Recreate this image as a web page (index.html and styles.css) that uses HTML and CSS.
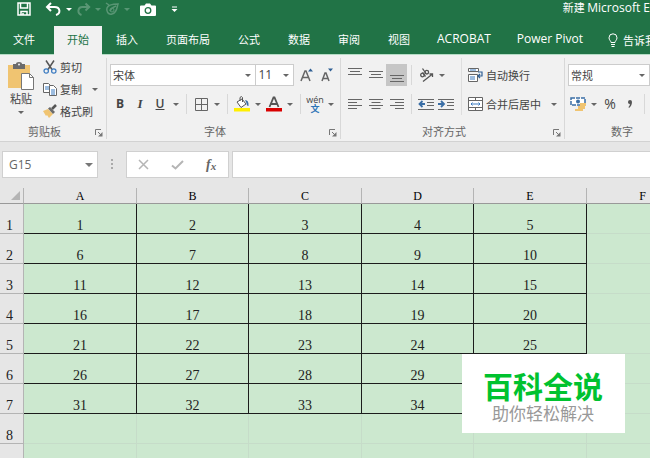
FILE: index.html
```html
<!DOCTYPE html>
<html lang="zh-CN">
<head>
  <meta charset="utf-8">
  <meta name="viewport" content="width=device-width, initial-scale=1.0">
  <title>新建 Microsoft Excel</title>
  <link rel="stylesheet" href="styles.css">
</head>

<body>

  <header class="titlebar">
    <div class="quick">
      <button class="qbtn" aria-label="保存"><svg width="14" height="14" viewBox="0 0 14 14"><path d="M1 1h12v12H1z M3.500 1v5h7V1 M4 13V9.500h6V13 M6 11v2" fill="none" stroke="#fff" stroke-width="1.500"/></svg></button>
      <button class="qbtn undo" aria-label="撤消"><svg width="17" height="14" viewBox="0 0 17 14"><path d="M6 1L2 5l4 4 M2 5h7.500c6 0 6.500 6.500 1.500 8" fill="none" stroke="#fff" stroke-width="2"/></svg></button>
      <button class="qcaret" aria-label="撤消列表"></button>
      <button class="qbtn dim" aria-label="恢复"><svg width="15" height="14" viewBox="0 0 15 14"><path d="M9.500 1.500L13.200 5 9.500 8.500 M13 5H6.500c-5 0-5.500 6.500-1 8" fill="none" stroke="#fff" stroke-width="2"/></svg></button>
      <button class="qcaret dim" aria-label="恢复列表"></button>
      <button class="qbtn dim" aria-label="触摸模式"><svg width="15" height="14" viewBox="0 0 15 14"><path d="M1 1l3 2 M2 6c1-3 5-4 11-4-1 3-1 9-6 10-4 1-6-3-5-6z M5 9c1-3 4-4 6-5" fill="none" stroke="#fff" stroke-width="1.500"/><circle cx="7" cy="8" r="2" fill="none" stroke="#fff"/></svg></button>
      <button class="qcaret dim" aria-label="触摸模式列表"></button>
      <button class="qbtn camera" aria-label="照相机"><svg width="16" height="13" viewBox="0 0 16 13"><path d="M1 2.500h3.500L6 .5h4l1.500 2H15q1 0 1 1V12q0 1-1 1H1q-1 0-1-1V3.500q0-1 1-1z" fill="#fff"/><circle cx="8" cy="7.500" r="2.800" fill="none" stroke="#217346" stroke-width="1.300"/></svg></button>
      <button class="qbtn more" aria-label="自定义快速访问工具栏"><svg width="7" height="7" viewBox="0 0 7 7"><path d="M1 1h5" stroke="#fff"/><path d="M.5 3h6l-3 3z" fill="#fff"/></svg></button>
    </div>
    <div class="doc-title">新建 <span class="latin">Microsoft E</span></div>
  </header>

  <nav class="tabs">
    <a href="#" class="tab file">文件</a>
    <a href="#" class="tab active">开始</a>
    <a href="#" class="tab">插入</a>
    <a href="#" class="tab">页面布局</a>
    <a href="#" class="tab">公式</a>
    <a href="#" class="tab">数据</a>
    <a href="#" class="tab">审阅</a>
    <a href="#" class="tab">视图</a>
    <a href="#" class="tab latin">ACROBAT</a>
    <a href="#" class="tab latin">Power Pivot</a>
    <a href="#" class="tab tell"><svg width="10" height="14" viewBox="0 0 10 14"><path d="M3 9.500C3 8 1 7 1 4.800a4 4 0 0 1 8 0C9 7 7 8 7 9.500z M3 11.500h4 M3.500 13.500h3" fill="none" stroke="#fff"/></svg>告诉我</a>
  </nav>

  <div class="ribbon">
    <section class="group clipboard">
      <div class="tools">
        <button class="paste">
          <svg width="28" height="28" viewBox="0 0 28 28"><path d="M1 3h22v23H1z" fill="#f0c471"/><path d="M6 2h3q0-2 3-2t3 2h3v5H6z" fill="#6b6b6b"/><circle cx="12" cy="2.500" r="1" fill="#f1f1f1"/><path d="M14.500 11.500h8l4 4v12h-12z" fill="#fff" stroke="#777"/><path d="M22.500 11.500v4h4" fill="none" stroke="#777"/></svg>
          <span>粘贴</span>
          <i class="caret"></i>
        </button>
        <div class="stack">
          <button class="text-btn"><svg width="14" height="14" viewBox="0 0 14 14"><path d="M3 .5l6 9 M11 .5l-6 9" stroke="#555" stroke-width="1.500"/><circle cx="3.200" cy="11" r="2.200" fill="none" stroke="#3a7ac0" stroke-width="1.200"/><circle cx="10.800" cy="11" r="2.200" fill="none" stroke="#3a7ac0" stroke-width="1.200"/></svg>剪切</button>
          <button class="text-btn"><svg width="14" height="14" viewBox="0 0 14 14"><path d="M.5 1.500h5l2 2v7h-7z" fill="#fff" stroke="#666"/><path d="M2 5h4M2 7h4" stroke="#3a7ac0"/><path d="M6.500 3.500h4l3 3v7h-7z" fill="#fff" stroke="#666"/><path d="M8 8h4M8 10h4M8 12h4" stroke="#3a7ac0"/></svg>复制<i class="caret"></i></button>
          <button class="text-btn"><svg width="14" height="14" viewBox="0 0 14 14"><path d="M0 7l5-2 5 5-4 4-2-3-1 1z" fill="#f0c471"/><path d="M5 4.500l2-1.500 5 5-2 2z" fill="#6b6b6b"/><path d="M9 5l4-4" stroke="#555" stroke-width="2.500"/></svg>格式刷</button>
        </div>
      </div>
      <div class="caption">剪贴板<button class="launcher" aria-label="剪贴板设置"><svg width="8" height="8" viewBox="0 0 8 8"><path d="M.5 6V.5H6 M3 3l3 3" fill="none" stroke="#777"/><path d="M7.500 3v4.500H3z" fill="#777"/></svg></button></div>
    </section>

    <section class="group font">
      <div class="tools rows">
        <div class="row">
          <select class="combo name" aria-label="字体"><option>宋体</option></select>
          <select class="combo size" aria-label="字号"><option>11</option></select>
          <button class="icon grow" aria-label="增大字号"><svg width="14" height="14" viewBox="0 0 14 14"><path d="M1 13L5 3h1l4 10 M2.500 9.500h6" fill="none" stroke="#666" stroke-width="1.500"/><path d="M8 3.500l2.500-3 2.500 3z" fill="#2f5f94"/></svg></button>
          <button class="icon" aria-label="减小字号"><svg width="14" height="14" viewBox="0 0 14 14"><path d="M2 13L5 5h1l3 8 M3 10.500h5" fill="none" stroke="#666" stroke-width="1.500"/><path d="M8 .5l2.500 3 2.500-3z" fill="#2f5f94"/></svg></button>
        </div>
        <div class="row">
          <button class="icon letter bold">B</button>
          <button class="icon letter italic">I</button>
          <button class="icon letter underline">U</button>
          <button class="drop" aria-label="下划线类型"></button>
          <span class="sep"></span>
          <button class="icon" aria-label="边框"><svg width="13" height="13" viewBox="0 0 13 13"><path d="M.5.500h12v12H.5z M6.500.500v12 M.5 6.500h12" fill="none" stroke="#666"/></svg></button>
          <button class="drop" aria-label="边框类型"></button>
          <span class="sep"></span>
          <button class="icon" aria-label="填充颜色"><svg width="16" height="16" viewBox="0 0 16 16"><path d="M3 6l5-3 4 5-5 3.500z" fill="#fff" stroke="#555"/><path d="M6 5V1.500q1.500-2 2.500 0V6" fill="none" stroke="#555"/><path d="M11 4q4 0 3.500 6-2 0-2-3z" fill="#3a6ea5"/><path d="M0 12h16v3.500H0z" fill="#ffef00"/></svg></button>
          <button class="drop" aria-label="填充颜色列表"></button>
          <button class="icon" aria-label="字体颜色"><svg width="16" height="16" viewBox="0 0 16 16"><path d="M3.500 11L7.500 1.500h1L12.500 11 M5 8h6" fill="none" stroke="#555" stroke-width="1.800"/><path d="M0 12h16v3.500H0z" fill="#d90000"/></svg></button>
          <button class="drop" aria-label="字体颜色列表"></button>
          <span class="sep"></span>
          <button class="icon wen"><span>wén</span><b>文</b></button>
          <button class="drop" aria-label="拼音"></button>
        </div>
      </div>
      <div class="caption">字体<button class="launcher" aria-label="字体设置"><svg width="8" height="8" viewBox="0 0 8 8"><path d="M.5 6V.5H6 M3 3l3 3" fill="none" stroke="#777"/><path d="M7.500 3v4.500H3z" fill="#777"/></svg></button></div>
    </section>

    <section class="group align">
      <div class="tools">
        <div class="rows">
          <div class="row">
            <button class="icon wide" aria-label="顶端对齐"><svg width="14" height="16" viewBox="0 0 14 16"><path d="M0 1.500h14M2 4.500h10M0 7.500h14" stroke="#666"/></svg></button>
            <button class="icon wide" aria-label="垂直居中"><svg width="14" height="16" viewBox="0 0 14 16"><path d="M0 4.500h14M2 7.500h10M0 10.500h14" stroke="#666"/></svg></button>
            <button class="icon wide on" aria-label="底端对齐"><svg width="14" height="16" viewBox="0 0 14 16"><path d="M0 8.500h14M2 11.500h10M0 14.500h14" stroke="#666"/></svg></button>
          </div>
          <div class="row">
            <button class="icon wide" aria-label="左对齐"><svg width="14" height="12" viewBox="0 0 14 12"><path d="M0 1.500h14M0 4.500h9M0 7.500h14M0 10.500h9" stroke="#666"/></svg></button>
            <button class="icon wide" aria-label="居中"><svg width="14" height="12" viewBox="0 0 14 12"><path d="M0 1.500h14M2.500 4.500h9M0 7.500h14M2.500 10.500h9" stroke="#666"/></svg></button>
            <button class="icon wide" aria-label="右对齐"><svg width="14" height="12" viewBox="0 0 14 12"><path d="M0 1.500h14M5 4.500h9M0 7.500h14M5 10.500h9" stroke="#666"/></svg></button>
          </div>
        </div>
        <div class="rows">
          <div class="row">
            <span class="sep"></span>
            <button class="icon" aria-label="方向"><svg width="15" height="15" viewBox="0 0 15 15"><g fill="none" stroke="#555" stroke-width="1.300"><circle cx="3.500" cy="7" r="1.800"/><path d="M3.500 4.500l3 4"/><circle cx="7.800" cy="4.200" r="1.800"/><path d="M3.500.500l3.500 5"/><path d="M4 13.500l9.500-7.500 M10.500 6h3v3"/></g></svg></button>
            <button class="drop" aria-label="方向列表"></button>
          </div>
          <div class="row">
            <span class="sep"></span>
            <button class="icon" aria-label="减少缩进量"><svg width="16" height="13" viewBox="0 0 16 13"><path d="M0 1.500h16M9 4.500h7M9 7.500h7M0 11.500h16" stroke="#666"/><path d="M7 6H2M4.500 3L1.500 6l3 3" fill="none" stroke="#3a6ea5" stroke-width="1.800"/></svg></button>
            <button class="icon" aria-label="增加缩进量"><svg width="16" height="13" viewBox="0 0 16 13"><path d="M0 1.500h16M9 4.500h7M9 7.500h7M0 11.500h16" stroke="#666"/><path d="M0 6h5M3 3l3 3-3 3" fill="none" stroke="#3a6ea5" stroke-width="1.800"/></svg></button>
          </div>
        </div>
        <div class="rows merge">
          <div class="row">
            <button class="text-btn"><svg width="15" height="14" viewBox="0 0 15 14"><path d="M.5.500h10v3H.5z M.5 6.500h9v7H.5z" fill="#fff" stroke="#666"/><path d="M2 2h6M2 9h5M2 11h5" stroke="#3a7ac0"/><path d="M10 4h4v4h-3.500 M12 6l-2 2 2 2" fill="none" stroke="#2f5f94" stroke-width="1.200"/></svg>自动换行</button>
          </div>
          <div class="row">
            <button class="text-btn"><svg width="15" height="14" viewBox="0 0 15 14"><path d="M.5.500h14v13H.5z M.5 3.500h14 M.5 10.500h14 M7.500.500v3 M7.500 10.500v3" fill="#fff" stroke="#666"/><path d="M3 7h9M4.500 5.500L3 7l1.500 1.500M10.500 5.500L12 7l-1.500 1.500" fill="none" stroke="#3a7ac0"/></svg>合并后居中<i class="caret"></i></button>
          </div>
        </div>
      </div>
      <div class="caption">对齐方式<button class="launcher" aria-label="对齐设置"><svg width="8" height="8" viewBox="0 0 8 8"><path d="M.5 6V.5H6 M3 3l3 3" fill="none" stroke="#777"/><path d="M7.500 3v4.500H3z" fill="#777"/></svg></button></div>
    </section>

    <section class="group number">
      <div class="tools rows">
        <div class="row">
          <select class="combo format" aria-label="数字格式"><option>常规</option></select>
        </div>
        <div class="row">
          <button class="icon" aria-label="会计数字格式"><svg width="17" height="15" viewBox="0 0 17 15"><path d="M1 1h14v7H1z" fill="#fff" stroke="#3a6ea5" stroke-width="1.500" stroke-dasharray="4 1"/><circle cx="8" cy="4.500" r="2" fill="#3a6ea5"/><path d="M10 6h6v3h-6z M8 9h7v3H8z M5 12h8v2H5z" fill="#f0c471"/></svg></button>
          <button class="drop" aria-label="会计数字格式列表"></button>
          <button class="icon letter percent">%</button>
          <button class="icon letter comma" aria-label="千位分隔样式"><svg width="6" height="9" viewBox="0 0 6 9"><path d="M1 2a2 2 0 0 1 4 0c0 3-1.500 5-3 6l-.5-1c1-1 1.500-2 1.300-3C1.500 4 1 3 1 2z" fill="#555"/></svg></button>
          <span class="sep"></span>
        </div>
      </div>
      <div class="caption">数字</div>
    </section>
  </div>

  <div class="formula-bar">
    <div class="name-box">
      <input type="text" value="G15" aria-label="名称框">
      <i class="caret big"></i>
    </div>
    <span class="dots"></span>
    <div class="fx-box">
      <button aria-label="取消"><svg width="11" height="11" viewBox="0 0 11 11"><path d="M1 1l9 9M10 1l-9 9" stroke="#b5b5b5" stroke-width="1.500"/></svg></button>
      <button aria-label="输入"><svg width="13" height="10" viewBox="0 0 13 10"><path d="M1 5.500l3.500 3L12 1" fill="none" stroke="#b5b5b5" stroke-width="2"/></svg></button>
      <button class="fx" aria-label="插入函数">f<small>x</small></button>
    </div>
    <input type="text" class="formula" aria-label="编辑栏">
  </div>

  <main class="sheet">
    <table>
      <colgroup>
        <col class="c-head"><col class="c-even"><col class="c-odd"><col class="c-even"><col class="c-odd"><col class="c-even"><col class="c-odd">
      </colgroup>
      <thead>
        <tr><th class="corner"><svg width="9" height="9" viewBox="0 0 9 9"><path d="M9 0v9H0z" fill="#b4b4b4"/></svg></th><th>A</th><th>B</th><th>C</th><th>D</th><th>E</th><th>F</th></tr>
      </thead>
      <tbody>
        <tr class="data"><th>1</th><td>1</td><td>2</td><td>3</td><td>4</td><td>5</td><td></td></tr>
        <tr class="data"><th>2</th><td>6</td><td>7</td><td>8</td><td>9</td><td>10</td><td></td></tr>
        <tr class="data"><th>3</th><td>11</td><td>12</td><td>13</td><td>14</td><td>15</td><td></td></tr>
        <tr class="data"><th>4</th><td>16</td><td>17</td><td>18</td><td>19</td><td>20</td><td></td></tr>
        <tr class="data"><th>5</th><td>21</td><td>22</td><td>23</td><td>24</td><td>25</td><td></td></tr>
        <tr class="data"><th>6</th><td>26</td><td>27</td><td>28</td><td>29</td><td></td><td></td></tr>
        <tr class="data"><th>7</th><td>31</td><td>32</td><td>33</td><td>34</td><td></td><td></td></tr>
        <tr><th>8</th><td></td><td></td><td></td><td></td><td></td><td></td></tr>
        <tr><th></th><td></td><td></td><td></td><td></td><td></td><td></td></tr>
      </tbody>
    </table>
  </main>

  <aside class="badge">
    <strong>百科全说</strong>
    <span>助你轻松解决</span>
  </aside>

</body>
</html>
```

FILE: styles.css
```css
* {
  box-sizing: border-box;
}

body {
  margin: 0;
  height: 100vh;
  display: flex;
  flex-direction: column;
  overflow: hidden;
  position: relative;
  background-color: #e6e6e6;
  color: #444;
  font-family: "Noto Sans CJK SC", sans-serif;
  font-size: 11px;
  line-height: 16px;
}

button, select, input {
  font: inherit;
  color: inherit;
  margin: 0;
  padding: 0;
  border: 0;
  background: none;
  border-radius: 0;
}

svg {
  display: block;
  flex: none;
}

.latin {
  font-family: "Open Sans", "Noto Sans CJK SC", sans-serif;
  font-size: 12px;
}

/* title bar */
.titlebar {
  flex: none;
  display: flex;
  justify-content: space-between;
  height: 26px;
  background-color: #217346;
  color: #fff;
}

.quick {
  display: flex;
  align-items: center;
  height: 18px;
  padding-left: 17px;
}

.undo {
  margin-left: 14px;
}

.camera {
  margin-left: 6px;
}

.more {
  margin-left: 15px;
}

.dim {
  opacity: 0.25;
}

.qcaret {
  width: 14px;
  height: 16px;
  display: flex;
  align-items: center;
  justify-content: center;
}

.qcaret::before {
  content: "";
  border: 3px solid transparent;
  border-top-color: #fff;
  border-bottom: 0;
}

.doc-title {
  line-height: 14px;
  white-space: nowrap;
}

/* tabs */
.tabs {
  flex: none;
  display: flex;
  height: 28px;
  background-color: #217346;
}

.tab {
  flex: none;
  padding: 0 14px;
  line-height: 26px;
  color: #fff;
  text-decoration: none;
  white-space: nowrap;
}

.tab.file {
  padding: 0 19px 0 13px;
}

.tab.active {
  padding: 0 13px;
  height: 29px;
  z-index: 1;
  background-color: #f1f1f1;
  color: #217346;
}

.tab.latin {
  padding: 0 13px;
}

.tab.tell {
  display: flex;
  align-items: center;
  gap: 5px;
  padding: 0 0 0 12px;
}

/* ribbon */
.ribbon {
  flex: none;
  display: flex;
  height: 88px;
  background-color: #f1f1f1;
  border-top: 1px solid #b5dcc5;
  border-bottom: 1px solid #d2d2d2;
}

.group {
  flex: none;
  display: flex;
  flex-direction: column;
  justify-content: space-between;
  margin: 3px 0 2px;
  padding: 0 3px;
  border-right: 1px solid #d8d8d8;
}

.group.clipboard {
  width: 107px;
}

.group.font {
  width: 234px;
}

.group.align {
  width: 224px;
}

.group.number {
  flex: 1;
  min-width: 0;
  overflow: hidden;
  padding-right: 0;
  border-right: 0;
}

.tools {
  display: flex;
}

.rows {
  display: flex;
  flex-direction: column;
  gap: 7px;
  padding-top: 6px;
}

.row {
  display: flex;
  align-items: center;
  height: 22px;
}

.caption {
  position: relative;
  text-align: center;
  color: #666;
  padding-right: 17px;
}

.launcher {
  position: absolute;
  right: 0;
  bottom: 2px;
}

.number .caption {
  padding-right: 0;
  width: 108px;
}

.caret {
  border: 3px solid transparent;
  border-top-color: #666;
  border-bottom: 0;
}

.caret.big {
  border-width: 4px;
  border-bottom: 0;
  border-top-color: #777;
}

.paste {
  display: flex;
  flex-direction: column;
  align-items: center;
  width: 36px;
  padding-top: 4px;
}

.paste .caret {
  margin-top: 5px;
}

.stack {
  display: flex;
  flex-direction: column;
  gap: 6px;
  padding: 1px 0 0 4px;
}

.text-btn {
  display: flex;
  align-items: center;
  gap: 3px;
  height: 16px;
  white-space: nowrap;
}

.text-btn .caret {
  margin-left: 7px;
}

.combo {
  appearance: none;
  height: 22px;
  padding-left: 2px;
  border: 1px solid #ccc;
  background: #fff url("data:image/svg+xml,%3Csvg xmlns='http://www.w3.org/2000/svg' width='6' height='3'%3E%3Cpath d='M0 0h6L3 3z' fill='%23666'/%3E%3C/svg%3E") no-repeat right 4px center;
}

.combo.name {
  width: 148px;
}

.combo.size {
  width: 38px;
  border-left: 0;
  font-family: "Open Sans", sans-serif;
  font-size: 12px;
}

.combo.format {
  width: 110px;
}

.icon {
  flex: none;
  display: flex;
  align-items: center;
  justify-content: center;
  width: 20px;
  height: 22px;
}

.icon.wide {
  width: 21px;
}

.icon.on {
  background-color: #c6c6c6;
}

.icon.grow {
  margin-left: 3px;
}

.letter {
  font-family: "Open Sans", sans-serif;
  font-size: 12px;
}

.bold {
  font-weight: bold;
}

.italic {
  font-family: "Liberation Serif", serif;
  font-size: 13px;
  font-style: italic;
  font-weight: bold;
}

.underline {
  font-weight: 600;
  text-decoration: underline;
}

.percent {
  font-size: 14px;
}

.drop {
  flex: none;
  display: flex;
  align-items: center;
  justify-content: center;
  width: 12px;
  height: 22px;
}

.drop::before {
  content: "";
  border: 3px solid transparent;
  border-top-color: #666;
  border-bottom: 0;
}

.sep {
  width: 1px;
  height: 20px;
  margin: 0 4px;
  background-color: #d8d8d8;
}

.wen {
  flex-direction: column;
  font-family: "Open Sans", "Noto Sans CJK SC", sans-serif;
  font-size: 9px;
  line-height: 9px;
}

.wen b {
  color: #2e75b6;
}

.merge {
  margin-left: 5px;
  padding-left: 6px;
  border-left: 1px solid #dedede;
}

/* formula bar */
.formula-bar {
  flex: none;
  display: flex;
  padding: 9px 0 10px 2px;
  height: 46px;
}

.name-box, .fx-box, .formula {
  height: 27px;
  border: 1px solid #d0d0d0;
  background-color: #fff;
}

.name-box {
  display: flex;
  align-items: center;
  width: 96px;
  padding: 0 4px 0 6px;
}

.name-box input {
  flex: 1;
  min-width: 0;
  font-family: "Open Sans", sans-serif;
  font-size: 12px;
  color: #666;
}

.dots {
  width: 2px;
  height: 11px;
  margin: 8px 13px 0;
  background: repeating-linear-gradient(#aaa 0 2px, transparent 2px 4px);
}

.fx-box {
  display: flex;
  justify-content: space-between;
  width: 103px;
}

.fx-box button {
  flex: 1;
  display: flex;
  align-items: center;
  justify-content: center;
}

.fx-box .fx {
  font-family: "Liberation Serif", serif;
  font-size: 14px;
  font-style: italic;
  font-weight: bold;
  color: #666;
}

.fx small {
  font-size: 11px;
  padding-top: 3px;
}

.formula {
  flex: 1;
  min-width: 0;
  margin-left: 3px;
  padding: 0 6px;
  border-right: 0;
}

/* sheet */
.sheet {
  flex: 1;
  min-height: 0;
  overflow: hidden;
}

table {
  width: 699px;
  table-layout: fixed;
  border-collapse: separate;
  border-spacing: 0;
  font-family: "Liberation Serif", serif;
  font-size: 14px;
  line-height: 14px;
  color: #222;
}

.c-head {
  width: 24px;
}

.c-odd {
  width: 112px;
}

.c-even {
  width: 113px;
}

th, td {
  padding: 0;
  height: 30px;
  text-align: center;
  vertical-align: bottom;
  border-right: 1px solid #c6dcc9;
  border-bottom: 1px solid #c6dcc9;
}

td {
  background-color: #cce8cf;
}

th {
  font-weight: normal;
  background-color: #e6e6e6;
  border-color: #b4b4b4;
}

tbody th {
  padding-right: 4px;
}

thead th {
  height: 16px;
  font-size: 12px;
  color: #000;
  border-bottom-color: #999;
}

.corner svg {
  margin: 0 3px 3px auto;
}

.data td:not(:last-child) {
  border-color: #1c1c1c;
}

/* badge over the sheet */
.badge {
  position: absolute;
  right: 25px;
  bottom: 25px;
  display: flex;
  flex-direction: column;
  align-items: center;
  padding: 14px 22px 10px 21px;
  background-color: #fff;
}

.badge strong {
  font-size: 30px;
  line-height: 34px;
  font-weight: bold;
  color: #00c22f;
}

.badge span {
  font-size: 17px;
  line-height: 21px;
  color: #999;
}
```
